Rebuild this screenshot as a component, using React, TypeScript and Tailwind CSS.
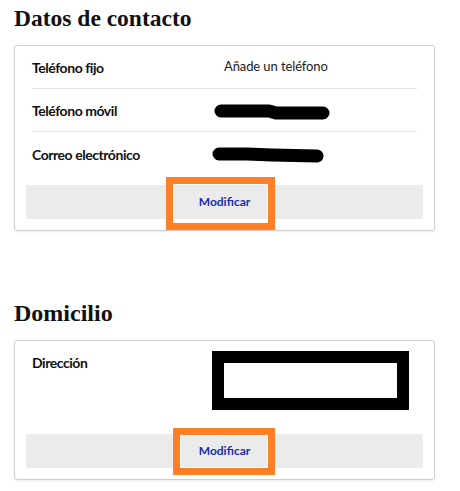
import type { ReactNode } from 'react';

const body = { fontFamily: 'Lato, "Noto Sans", sans-serif' };
const serif = { fontFamily: '"Liberation Serif", "DejaVu Serif", serif' };

function Scribble({ width, d }: { width: number; d: string }) {
  return (
    <svg width={width} height="16" viewBox={`0 0 ${width} 16`} className="block">
      <path d={d} stroke="#000" strokeWidth="13" strokeLinecap="round" strokeLinejoin="round" fill="none" />
    </svg>
  );
}

function Row({ label, children, last }: { label: string; children: ReactNode; last?: boolean }) {
  return (
    <div
      className={`flex h-[43px] items-center ${last ? 'h-[44px]' : 'border-b border-[#e3e3e3]'}`}
    >
      <div className="w-[192px] text-[14px] font-bold tracking-[-0.45px] text-[#111]">{label}</div>
      <div className="flex-1 text-[13px] tracking-[-0.1px] text-[#222]">{children}</div>
    </div>
  );
}

function ModifyBar({ highlight }: { highlight: string }) {
  return (
    <div className="relative mx-[11px] flex h-[34px] items-center justify-center rounded-[2px] bg-[#ebebeb]">
      <span className="text-[12px] font-bold text-[#1b2ea6]">Modificar</span>
      <div className={`pointer-events-none absolute border-[7px] border-[#ff7f27] ${highlight}`}>
        <div className="h-full w-full border border-white" />
      </div>
    </div>
  );
}

export default function App() {
  return (
    <div className="min-h-screen bg-white px-[14px] pt-[2px]" style={body}>
      <h2 className="text-[23.5px] font-bold leading-[33px] text-[#111]" style={serif}>
        Datos de contacto
      </h2>
      <div className="mt-[10px] w-[421px] rounded-[3px] border border-[#cfcfcf] pb-[11px] shadow-[0_1px_2px_rgba(0,0,0,0.08)]">
        <div className="px-[17px]">
          <Row label="Teléfono fijo">Añade un teléfono</Row>
          <Row label="Teléfono móvil">
            <div className="-ml-[10px] mt-[3px]">
              <Scribble width={116} d="M7 7 L55 7 L62 9 L109 9" />
            </div>
          </Row>
          <Row label="Correo electrónico" last>
            <div className="-ml-[12px] mt-[2px]">
              <Scribble width={113} d="M7 7 L35 7 L60 8 L105 9" />
            </div>
          </Row>
        </div>
        <div className="mt-[9px]">
          <ModifyBar highlight="left-[140px] top-[-8px] h-[53px] w-[109px]" />
        </div>
      </div>

      <h2 className="mt-[66px] text-[24px] font-bold leading-[33px] text-[#111]" style={serif}>
        Domicilio
      </h2>
      <div className="mt-[10px] w-[421px] rounded-[3px] border border-[#cfcfcf] pb-[11px] shadow-[0_1px_2px_rgba(0,0,0,0.08)]">
        <div className="flex items-start px-[17px] pt-[12px]">
          <div className="w-[180px] text-[14px] font-bold leading-[20px] tracking-[-0.45px] text-[#111]">
            Dirección
          </div>
          <div className="-mt-[2px] h-[59px] w-[197px] border-[12px] border-black bg-white" />
        </div>
        <div className="mt-[24px]">
          <ModifyBar highlight="left-[147px] top-[-6px] h-[47px] w-[102px]" />
        </div>
      </div>
    </div>
  );
}
